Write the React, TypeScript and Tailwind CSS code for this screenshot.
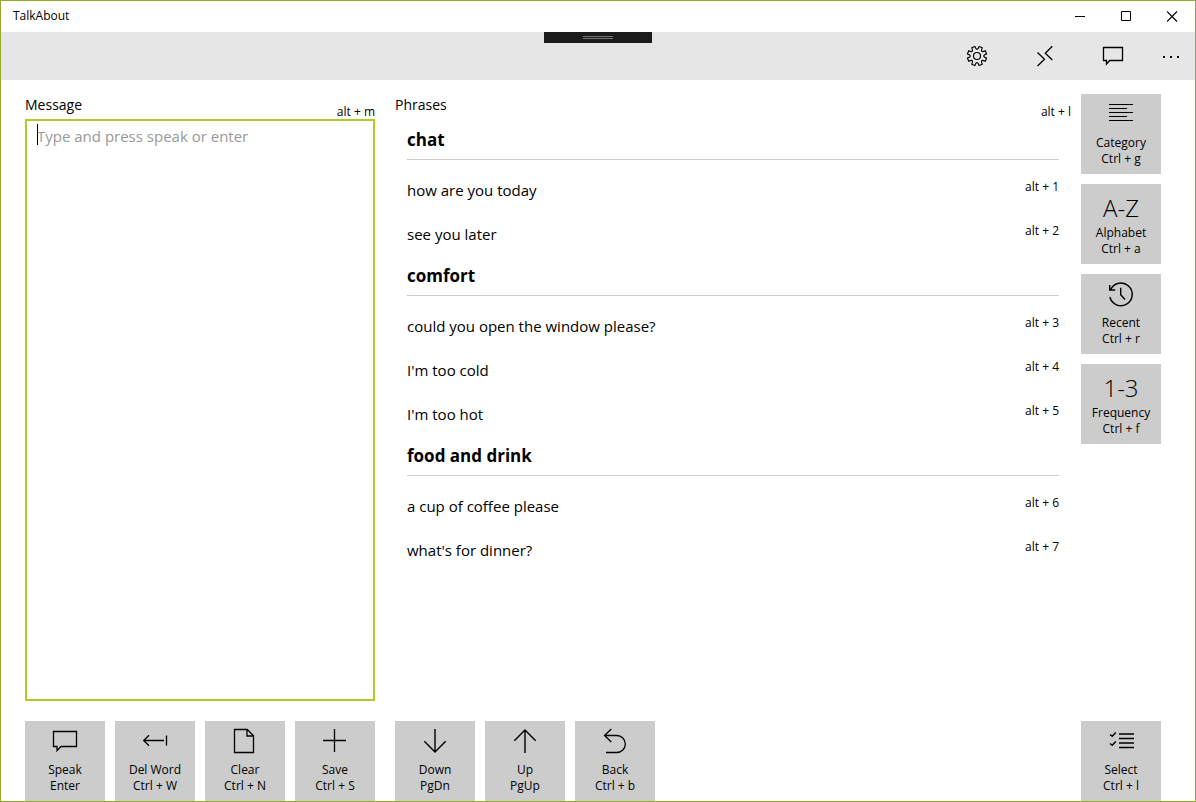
import type { ReactNode } from 'react';

const FONT = "font-['Open_Sans','Noto_Sans',sans-serif]";

function Icon({ children, width = 1.2 }: { children: ReactNode; width?: number }) {
  return (
    <svg
      viewBox="0 0 32 32"
      className="size-8 shrink-0"
      fill="none"
      stroke="currentColor"
      strokeWidth={width}
      aria-hidden="true"
    >
      {children}
    </svg>
  );
}

function gearPath(cx: number, cy: number) {
  const at = (deg: number, r: number) => {
    const a = (deg * Math.PI) / 180;
    return `${(cx + r * Math.cos(a)).toFixed(2)} ${(cy + r * Math.sin(a)).toFixed(2)}`;
  };
  let d = '';
  for (let k = 0; k < 8; k++) {
    const mid = 22.5 + k * 45;
    d += `${k === 0 ? 'M' : 'L'}${at(mid - 10, 9.8)}L${at(mid + 10, 9.8)}`;
    d += `C${at(mid + 14, 5.8)} ${at(mid + 31, 5.8)} ${at(mid + 35, 9.8)}`;
  }
  return `${d}Z`;
}

const icons = {
  gear: (
    <Icon>
      <path d={gearPath(16, 16)} strokeLinejoin="round" />
      <circle cx="16" cy="16" r="3.5" />
    </Icon>
  ),
  connect: (
    <Icon width={1.3}>
      <path d="M8.500 12.500 15.500 19.300 8.500 26M23.300 6.200 16.300 13.200l7 6.800" />
    </Icon>
  ),
  feedback: (
    <Icon width={1.3}>
      <path d="M6.500 7.500h19v13H12.700L9.500 24v-3.500h-3z" />
    </Icon>
  ),
  more: (
    <Icon>
      <path d="M8 16h2v2H8zM15 16h2v2h-2zM22 16h2v2h-2z" fill="currentColor" stroke="none" />
    </Icon>
  ),
  speak: (
    <Icon width={1.3}>
      <path d="M4.500 6.500h23v15H12l-4 4.200v-4.200H4.500z" />
    </Icon>
  ),
  delWord: (
    <Icon width={1.3}>
      <path d="M10 10.200 4.700 15.500l5.300 5.300M4.700 15.500H25M27.500 10.500v10" />
    </Icon>
  ),
  clear: (
    <Icon width={1.3}>
      <path d="M5.500 4.500h12.800l6.200 6.200v16.800h-19zM18 4.500v6.500h6.500" />
    </Icon>
  ),
  save: (
    <Icon width={1.3}>
      <path d="M15.500 4v23M4 15.500h23" />
    </Icon>
  ),
  down: (
    <Icon width={1.4}>
      <path d="M16 4v23M5.300 16.300 16 27l10.700-10.700" />
    </Icon>
  ),
  up: (
    <Icon width={1.4}>
      <path d="M16 28V5M5.300 15.700 16 5l10.700 10.700" />
    </Icon>
  ),
  back: (
    <Icon width={1.3}>
      <path d="M12.300 4 5.500 10.500l6.800 6.500M5.500 10.500h12.300a8.500 8.500 0 0 1 0 17H7" />
    </Icon>
  ),
  category: (
    <Icon width={1}>
      <path d="M4 6.500h24M4 10.500h18M4 14.500h24M4 18.500h18M4 22.500h24" />
    </Icon>
  ),
  recent: (
    <Icon width={1.4}>
      <path d="M4.900 19a11.300 11.300 0 1 0 .8-7.500M4.700 7v5h5.500M15.700 9.700v7l4.300 4.800" />
    </Icon>
  ),
  select: (
    <Icon width={1.4}>
      <path d="M14 9h15M14 13.500h15M14 18h15M14 22.500h15M5 9.500 7.200 11.300 10.800 7.500M5 18.500l2.200 1.800 3.600-3.800" />
    </Icon>
  ),
};

function Tile({ icon, text, label, keys }: { icon?: ReactNode; text?: string; label: string; keys: string }) {
  return (
    <button
      type="button"
      className="flex size-20 shrink-0 flex-col items-center bg-[#cccccc] pt-1 text-xs leading-4 text-black hover:bg-[#bdbdbd]"
    >
      {icon ?? <span className="flex h-8 items-end text-2xl leading-6 font-light">{text}</span>}
      <span className="mt-[5px]">{label}</span>
      <span>{keys}</span>
    </button>
  );
}

const groups = [
  { name: 'chat', phrases: ['how are you today', 'see you later'], first: 1 },
  {
    name: 'comfort',
    phrases: ['could you open the window please?', "I'm too cold", "I'm too hot"],
    first: 3,
  },
  { name: 'food and drink', phrases: ['a cup of coffee please', "what's for dinner?"], first: 6 },
];

function TitleBar() {
  const control = 'flex w-[46px] items-center justify-center hover:bg-gray-200';
  return (
    <header className="flex h-[31px] shrink-0 bg-white">
      <h1 className="flex-1 pl-3 text-xs leading-[30px]">TalkAbout</h1>
      <button type="button" aria-label="Minimize" className={control}>
        <svg viewBox="0 0 11 11" className="size-[11px]" stroke="black" fill="none">
          <path d="M0 5.500h10" />
        </svg>
      </button>
      <button type="button" aria-label="Maximize" className={control}>
        <svg viewBox="0 0 11 11" className="size-[11px]" stroke="black" fill="none">
          <path d="M.5.500h9v9h-9z" />
        </svg>
      </button>
      <button type="button" aria-label="Close" className={control}>
        <svg viewBox="0 0 11 11" className="size-[11px]" stroke="black" strokeWidth="1.2" fill="none">
          <path d="m0 .500 10 10M10 .500l-10 10" />
        </svg>
      </button>
    </header>
  );
}

function CommandBar() {
  const command = 'flex w-[68px] items-center justify-center hover:bg-gray-300';
  return (
    <nav className="relative flex h-12 shrink-0 justify-end bg-[#e6e6e6] text-black">
      <div className="absolute top-0 left-1/2 flex h-[11px] w-[108px] -translate-x-1/2 flex-col items-center gap-px bg-[#1b1b1b] pt-1">
        <span className="h-px w-[30px] bg-[#767676]" />
        <span className="h-px w-[30px] bg-[#767676]" />
      </div>
      <button type="button" aria-label="Settings" className={command}>
        {icons.gear}
      </button>
      <button type="button" aria-label="Connect" className={command}>
        {icons.connect}
      </button>
      <button type="button" aria-label="Feedback" className={command}>
        {icons.feedback}
      </button>
      <button type="button" aria-label="More" className="flex w-12 items-center justify-center hover:bg-gray-300">
        {icons.more}
      </button>
    </nav>
  );
}

export default function App() {
  return (
    <div className={`flex min-h-screen flex-col border border-[#96ab2c] bg-white text-black ${FONT}`}>
      <TitleBar />
      <CommandBar />
      <main className="flex flex-1 flex-col gap-5 pt-3.5 pr-[34px] pl-6">
        <div className="flex flex-1">
          <section className="flex w-[350px] shrink-0 flex-col">
            <div className="flex h-[25px] justify-between">
              <label htmlFor="message" className="text-sm leading-[22px]">
                Message
              </label>
              <span className="self-end text-xs leading-3.5">alt + m</span>
            </div>
            <div className="relative flex flex-1">
              <textarea
                id="message"
                placeholder="Type and press speak or enter"
                className="flex-1 resize-none border-2 border-[#b0cb28] px-2.5 py-[3px] text-[15px] leading-6 outline-none placeholder:text-[#999999]"
              />
              <span className="absolute top-[5px] left-3 h-[21px] w-px bg-black" />
            </div>
          </section>
          <section className="ml-5 flex-1">
            <div className="flex h-[25px] justify-between">
              <h2 className="text-sm leading-[22px]">Phrases</h2>
              <span className="self-end text-xs leading-3.5">alt + l</span>
            </div>
            <div className="px-3 pt-px">
              {groups.map((group) => (
                <div key={group.name}>
                  <h3 className="h-10 border-b border-[#cccccc] text-[17px] leading-10 font-bold">{group.name}</h3>
                  <ul className="pt-2">
                    {group.phrases.map((phrase, i) => (
                      <li key={phrase}>
                        <button type="button" className="flex h-11 w-full items-start justify-between pt-2.5 text-left">
                          <span className="text-[15px] leading-6">{phrase}</span>
                          <span className="text-xs leading-[18px]">alt + {group.first + i}</span>
                        </button>
                      </li>
                    ))}
                  </ul>
                </div>
              ))}
            </div>
          </section>
          <aside className="ml-2.5 flex w-20 shrink-0 flex-col gap-2.5">
            <Tile icon={icons.category} label="Category" keys="Ctrl + g" />
            <Tile text="A-Z" label="Alphabet" keys="Ctrl + a" />
            <Tile icon={icons.recent} label="Recent" keys="Ctrl + r" />
            <Tile text="1-3" label="Frequency" keys="Ctrl + f" />
          </aside>
        </div>
        <div className="flex gap-5">
          <div className="flex gap-2.5">
            <Tile icon={icons.speak} label="Speak" keys="Enter" />
            <Tile icon={icons.delWord} label="Del Word" keys="Ctrl + W" />
            <Tile icon={icons.clear} label="Clear" keys="Ctrl + N" />
            <Tile icon={icons.save} label="Save" keys="Ctrl + S" />
          </div>
          <div className="flex flex-1 gap-2.5">
            <Tile icon={icons.down} label="Down" keys="PgDn" />
            <Tile icon={icons.up} label="Up" keys="PgUp" />
            <Tile icon={icons.back} label="Back" keys="Ctrl + b" />
          </div>
          <Tile icon={icons.select} label="Select" keys="Ctrl + l" />
        </div>
      </main>
    </div>
  );
}
